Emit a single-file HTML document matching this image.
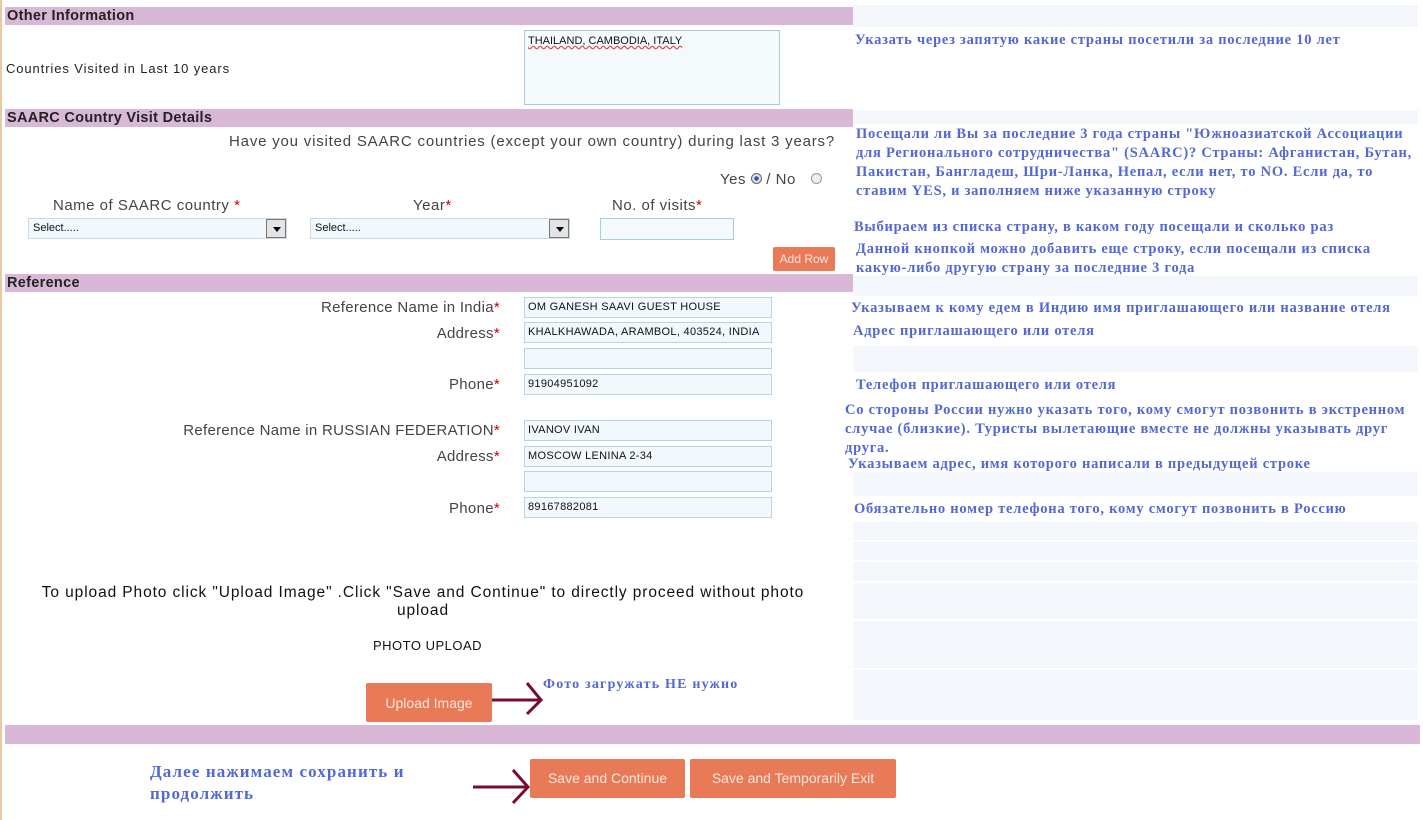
<!DOCTYPE html>
<html><head><meta charset="utf-8"><style>
*{margin:0;padding:0;box-sizing:border-box}
body{width:1423px;height:820px;background:#fff;position:relative;overflow:hidden;font-family:"Liberation Sans","DejaVu Sans",sans-serif;color:#333}
.a{position:absolute;white-space:nowrap}
.band{position:absolute;background:#d9b8d7;height:18px;font-size:14.5px;color:#222;padding-left:2px;line-height:18px;font-weight:bold;letter-spacing:0.3px}
.lbl{position:absolute;right:923px;font-size:15px;color:#444;white-space:nowrap;letter-spacing:0.3px}
.lbl b{color:#c00;font-weight:normal}
.in{position:absolute;left:524px;width:248px;height:21px;border:1px solid #b6d4e2;background:#f2f8fc;font-size:11px;color:#111;padding-left:3px;line-height:19px;letter-spacing:0.3px}
.sel{position:absolute;height:21px;border:1px solid #c6dbe6;background:#f2f8fc;font-size:11px;line-height:19px;padding-left:4px;color:#111}
.sel i{position:absolute;right:0;top:0;width:20px;height:19px;background:#e4e4e4;border:1px solid #777}
.sel i:after{content:"";position:absolute;left:6px;top:7px;border:4px solid transparent;border-top:5px solid #000}
.btn{position:absolute;background:#e87a58;color:#fde6dd;font-size:14px;text-align:center;border-radius:2px}
.ru{position:absolute;font-family:"Liberation Serif","DejaVu Serif",serif;font-weight:bold;color:#5268d4;font-size:14.5px;white-space:nowrap;letter-spacing:0.75px}
.rp{position:absolute;left:853px;width:565px;background:#f4f8fd}
</style></head><body>
<div class="a" style="left:0;top:0;width:2px;height:820px;background:#e9c9a4"></div>
<div class="rp" style="top:5px;height:22px"></div>
<div class="rp" style="top:28px;height:80px;background:#fff"></div>
<div class="rp" style="top:110px;height:14px"></div>
<div class="rp" style="top:124px;height:84px;background:#fff"></div>
<div class="rp" style="top:210px;height:64px;background:#fff"></div>
<div class="rp" style="top:276px;height:20px"></div>
<div class="rp" style="top:346px;height:26px"></div>
<div class="rp" style="top:472px;height:24px"></div>
<div class="rp" style="top:522px;height:198px"></div>
<div class="a" style="left:853px;top:540px;width:565px;height:2px;background:#fff"></div>
<div class="a" style="left:853px;top:560px;width:565px;height:2px;background:#fff"></div>
<div class="a" style="left:853px;top:581px;width:565px;height:2px;background:#fff"></div>
<div class="a" style="left:853px;top:619px;width:565px;height:2px;background:#fff"></div>
<div class="a" style="left:853px;top:668px;width:565px;height:2px;background:#fff"></div>

<div class="band" style="left:5px;top:7px;width:848px">Other Information</div>
<div class="a" style="left:6px;top:61px;font-size:13px;color:#222;letter-spacing:0.9px">Countries Visited in Last 10 years</div>
<div class="a" style="left:524px;top:30px;width:256px;height:75px;border:1px solid #a8cde0;background:#f4f9fc;font-size:11px;padding:4px 3px;color:#111"><span style="text-decoration:underline wavy #d44">THAILAND, CAMBODIA, ITALY</span></div>

<div class="band" style="left:5px;top:109px;width:848px">SAARC Country Visit Details</div>
<div class="a" style="right:588px;top:133px;font-size:15px;color:#444;letter-spacing:0.8px">Have you visited SAARC countries (except your own country) during last 3 years?</div>
<div class="a" style="left:720px;top:171px;font-size:15px;color:#444;letter-spacing:0.5px">Yes <span style="display:inline-block;width:11px;height:11px;border-radius:50%;border:1px solid #666;background:radial-gradient(#2a5aa0 30%,#dde 40%);vertical-align:0"></span> / No <span style="display:inline-block;width:11px;height:11px;border-radius:50%;border:1px solid #999;background:#eee;margin-left:10px"></span></div>
<div class="a" style="left:53px;top:197px;font-size:15px;color:#444;letter-spacing:0.5px">Name of SAARC country <b style="color:#c00;font-weight:normal">*</b></div>
<div class="a" style="left:413px;top:197px;font-size:15px;color:#444;letter-spacing:0.5px">Year<b style="color:#c00;font-weight:normal">*</b></div>
<div class="a" style="left:612px;top:197px;font-size:15px;color:#444;letter-spacing:0.5px">No. of visits<b style="color:#c00;font-weight:normal">*</b></div>
<div class="sel" style="left:28px;top:218px;width:259px">Select.....<i></i></div>
<div class="sel" style="left:310px;top:218px;width:260px">Select.....<i></i></div>
<div class="a" style="left:600px;top:218px;width:134px;height:22px;border:1px solid #a8cde0;background:#f4f9fc"></div>
<div class="btn" style="left:773px;top:247px;width:62px;height:24px;line-height:24px;font-size:12px">Add Row</div>

<div class="band" style="left:5px;top:274px;width:848px">Reference</div>
<div class="lbl" style="top:299px">Reference Name in India<b>*</b></div>
<div class="in" style="top:297px">OM GANESH SAAVI GUEST HOUSE</div>
<div class="lbl" style="top:325px">Address<b>*</b></div>
<div class="in" style="top:322px">KHALKHAWADA, ARAMBOL, 403524, INDIA</div>
<div class="in" style="top:348px"></div>
<div class="lbl" style="top:376px">Phone<b>*</b></div>
<div class="in" style="top:374px">91904951092</div>
<div class="lbl" style="top:422px">Reference Name in RUSSIAN FEDERATION<b>*</b></div>
<div class="in" style="top:420px">IVANOV IVAN</div>
<div class="lbl" style="top:448px">Address<b>*</b></div>
<div class="in" style="top:446px">MOSCOW LENINA 2-34</div>
<div class="in" style="top:471px"></div>
<div class="lbl" style="top:500px">Phone<b>*</b></div>
<div class="in" style="top:497px">89167882081</div>

<div class="a" style="left:0;width:846px;top:584px;text-align:center;font-size:15.5px;color:#111;white-space:normal;line-height:18px;letter-spacing:0.9px">To upload Photo click "Upload Image" .Click "Save and Continue" to directly proceed without photo<br>upload</div>
<div class="a" style="left:373px;top:638px;font-size:13px;color:#111;letter-spacing:0.5px">PHOTO UPLOAD</div>
<div class="btn" style="left:366px;top:683px;width:126px;height:39px;line-height:40px">Upload Image</div>
<div class="ru" style="left:543px;top:677px;font-size:14px;letter-spacing:1.2px">Фото загружать НЕ нужно</div>

<div class="band" style="left:5px;top:725px;width:1415px;height:19px"></div>
<div class="ru" style="left:150px;top:761px;font-size:17px;line-height:22px;white-space:normal;width:300px;letter-spacing:1.1px">Далее нажимаем сохранить и продолжить</div>
<div class="btn" style="left:530px;top:759px;width:155px;height:39px;line-height:39px">Save and Continue</div>
<div class="btn" style="left:690px;top:759px;width:206px;height:39px;line-height:39px">Save and Temporarily Exit</div>

<svg class="a" style="left:0;top:0" width="1423" height="820">
<g stroke="#7a0b30" stroke-width="3" fill="none">
<path d="M492 700H540M527 683L541 700L527 714"/>
<path d="M473 787H527M513 770L528 787L513 803"/>
</g></svg>

<div class="ru" style="left:855px;top:32px">Указать через запятую какие страны посетили за последние 10 лет</div>
<div class="ru" style="left:856px;top:125px;line-height:19px">Посещали ли Вы за последние 3 года страны  "Южноазиатской Ассоциации<br>для Регионального сотрудничества" (SAARC)? Страны: Афганистан, Бутан,<br>Пакистан, Бангладеш, Шри-Ланка, Непал, если нет, то NO. Если да, то<br>ставим YES, и заполняем ниже указанную строку</div>
<div class="ru" style="left:854px;top:219px">Выбираем из списка страну, в каком году посещали и сколько раз</div>
<div class="ru" style="left:856px;top:240px;line-height:19px">Данной кнопкой можно добавить еще строку, если посещали из списка<br>какую-либо другую страну за последние 3 года</div>
<div class="ru" style="left:851px;top:300px">Указываем к кому едем в Индию имя приглашающего или название отеля</div>
<div class="ru" style="left:853px;top:323px">Адрес приглашающего или отеля</div>
<div class="ru" style="left:856px;top:377px">Телефон приглашающего или отеля</div>
<div class="ru" style="left:845px;top:401px;line-height:19px">Со стороны России нужно указать того, кому смогут позвонить в экстренном<br>случае (близкие). Туристы вылетающие вместе не должны указывать друг<br>друга.</div>
<div class="ru" style="left:848px;top:456px">Указываем адрес, имя которого написали в предыдущей строке</div>
<div class="ru" style="left:854px;top:501px">Обязательно номер телефона того, кому смогут позвонить в Россию</div>
</body></html>
